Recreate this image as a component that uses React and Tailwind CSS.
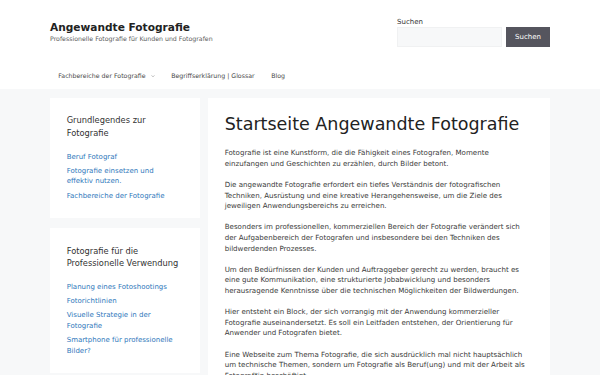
const sidebarWidgets = [
  {
    title: "Grundlegendes zur Fotografie",
    links: ["Beruf Fotograf", "Fotografie einsetzen und effektiv nutzen.", "Fachbereiche der Fotografie"],
  },
  {
    title: "Fotografie für die Professionelle Verwendung",
    links: [
      "Planung eines Fotoshootings",
      "Fotorichtlinien",
      "Visuelle Strategie in der Fotografie",
      "Smartphone für professionelle Bilder?",
    ],
  },
];

const paragraphs = [
  "Fotografie ist eine Kunstform, die die Fähigkeit eines Fotografen, Momente einzufangen und Geschichten zu erzählen, durch Bilder betont.",
  "Die angewandte Fotografie erfordert ein tiefes Verständnis der fotografischen Techniken, Ausrüstung und eine kreative Herangehensweise, um die Ziele des jeweiligen Anwendungsbereichs zu erreichen.",
  "Besonders im professionellen, kommerziellen Bereich der Fotografie verändert sich der Aufgabenbereich der Fotografen und insbesondere bei den Techniken des bildwerdenden Prozesses.",
  "Um den Bedürfnissen der Kunden und Auftraggeber gerecht zu werden, braucht es eine gute Kommunikation, eine strukturierte Jobabwicklung und besonders herausragende Kenntnisse über die technischen Möglichkeiten der Bildwerdungen.",
  "Hier entsteht ein Block, der sich vorrangig mit der Anwendung kommerzieller Fotografie auseinandersetzt. Es soll ein Leitfaden entstehen, der Orientierung für Anwender und Fotografen bietet.",
  "Eine Webseite zum Thema Fotografie, die sich ausdrücklich mal nicht hauptsächlich um technische Themen, sondern um Fotografie als Beruf(ung) und mit der Arbeit als Fotograf*in beschäftigt.",
];

const navItems = ["Fachbereiche der Fotografie", "Begriffserklärung | Glossar", "Blog"];

export default function App() {
  return (
    <div className="min-h-screen bg-[#f7f8f9] font-['DejaVu_Sans',sans-serif] text-[#222]">
      {/* Header */}
      <header className="bg-white">
        <div className="mx-auto flex w-[500px] items-center justify-between py-[16.5px]">
          <div>
            <p className="text-[10.6px] leading-[12.5px] font-bold text-[#222]">Angewandte Fotografie</p>
            <p className="mt-[1px] text-[6.25px] leading-[9px] text-[#5c5c5c]">
              Professionelle Fotografie für Kunden und Fotografen
            </p>
          </div>
          <div className="w-[153px]">
            <label className="block text-[7px] leading-[10.6px] text-[#333]">Suchen</label>
            <div className="flex gap-[4px]">
              <input className="h-[20px] w-[105px] border border-[#f0f1f2] bg-[#f7f8f9] outline-none" />
              <button className="h-[20px] flex-1 bg-[#55555e] text-[7px] text-white">Suchen</button>
            </div>
          </div>
        </div>

        {/* Navigation */}
        <nav className="h-[25px]">
          <ul className="mx-auto flex h-full w-[500px] items-center">
            {navItems.map((item, i) => (
              <li key={item} className="flex items-center px-[8.3px] text-[6.25px] text-[#4a4a4a]">
                {item}
                {i === 0 && (
                  <svg className="ml-[5px] h-[4px] w-[4px]" viewBox="0 0 10 10" fill="none">
                    <path d="M1.5 3.5 5 7l3.5-3.5" stroke="#777" strokeWidth="1.3" />
                  </svg>
                )}
              </li>
            ))}
          </ul>
        </nav>
      </header>

      {/* Content */}
      <div className="mx-auto flex w-[500px] gap-[8px] pt-[9px]">
        <aside className="flex w-[150px] shrink-0 flex-col gap-[10px]">
          {sidebarWidgets.map((w) => (
            <section key={w.title} className="bg-white py-[16.7px] pl-[16.7px] pr-[19px]">
              <h2 className="mb-[12.5px] text-[8.3px] leading-[12.5px] text-[#333]">{w.title}</h2>
              <ul className="flex flex-col gap-[3.5px]">
                {w.links.map((l) => (
                  <li key={l} className="text-[7px] leading-[10.6px]">
                    <a href="#" className="text-[#2f78bb]">
                      {l}
                    </a>
                  </li>
                ))}
              </ul>
            </section>
          ))}
        </aside>

        <main className="flex-1 bg-white p-[16.7px]">
          <h1 className="text-[17.5px] leading-[21px] text-[#222]">Startseite Angewandte Fotografie</h1>
          <div className="mt-[13px] flex flex-col gap-[10.6px]">
            {paragraphs.map((p) => (
              <p key={p.slice(0, 20)} className="text-[7.08px] leading-[10.6px] text-[#3a3a3a]">
                {p}
              </p>
            ))}
          </div>
        </main>
      </div>
    </div>
  );
}
